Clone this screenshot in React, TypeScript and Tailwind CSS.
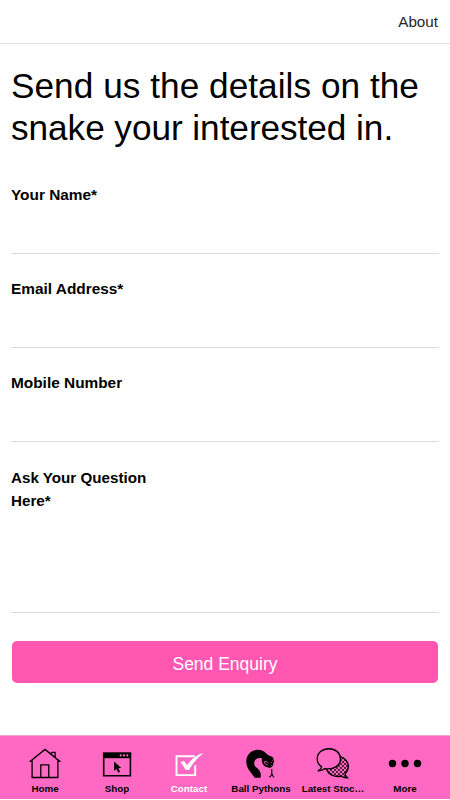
import type { ReactNode } from "react";

interface FieldProps {
  label: string;
  id: string;
  type?: string;
}

function Field({ label, id, type = "text" }: FieldProps) {
  return (
    <div className="h-[94px] flex flex-col items-start">
      <label htmlFor={id} className="text-[15.4px] leading-[23px] font-bold">
        {label}
      </label>
      <input id={id} type={type} className="block w-full h-[48px] border-b border-[#dcdcdc] outline-none" />
    </div>
  );
}

function HomeIcon() {
  return (
    <svg width="34" height="34" viewBox="0 0 34 34" fill="none" stroke="#000" strokeWidth="1.3">
      <path d="M2.4 14.2 17 2.4l14.6 11.8h-1.7V30.5H4.1V14.2H2.4ZM12.8 30.5V17.8h8V30.5M22.8 6.8l1.3-1.4h3v4.8" />
    </svg>
  );
}

function ShopIcon() {
  return (
    <svg width="34" height="34" viewBox="0 0 34 34">
      <path d="M3.7 6.3h26.7v22.4H3.7z" fill="none" stroke="#000" strokeWidth="1.6" />
      <path d="M3 5.6h28.1v5.6H3z" />
      <path d="m14.1 14.5 7.2 6.5-3.1.2 1.9 3.5-1.8 1-1.9-3.6-2.3 1.8z" />
      <g fill="#ff69c3">
        <circle cx="20.7" cy="8.4" r="1.1" />
        <circle cx="24" cy="8.4" r="1.1" />
        <circle cx="27.3" cy="8.4" r="1.1" />
      </g>
    </svg>
  );
}

function ContactIcon() {
  return (
    <svg width="34" height="34" viewBox="0 0 34 34">
      <path d="M23 9.2H4.5v18.9h18.7V18.3" fill="none" stroke="#fff" strokeWidth="1.9" />
      <path d="m8.3 15.2 3.6-1.5 3 4.6c4.3-6 9.2-10.5 16.6-12.4-5.6 4.3-10.5 9.8-14.5 17.2h-3.4c-1.4-3.1-3-5.5-5.3-7.9Z" fill="#fff" />
    </svg>
  );
}

function SnakeIcon() {
  return (
    <svg width="34" height="34" viewBox="0 0 34 34">
      <path d="M10.6 30.8C9.6 27.6 2.3 23.1 2.3 14.5 2.3 7.4 7.5 2.8 13.8 2.8c5.4 0 8.1 3.5 11 5.8 3 .8 5.2 2.1 5.3 4.2.1 1.7-.5 2.7-.8 4.3-.4 2.6-1.9 3.8-4 3.6-3.7-.2-6.6-2.2-7.3-5.6-.3-1.5 0-3-.3-4-4-.6-7.4 1.3-7.5 4.8-.1 2.2 1 3.7 2.8 5.2 3.6 3 4.2 5.7 3.6 9.7Z" />
      <path d="M20.5 14.4c.1 2.4 1.3 3.6 3.3 3.5" fill="none" stroke="#ff69c3" strokeWidth=".9" />
      <path d="M20.8 14.3c1.8.2 3.1.9 3.7 2.1M29.6 11.4c.1 1.1-.4 1.8-1.3 2.1" fill="none" stroke="#ff69c3" strokeWidth=".8" />
      <path d="m27.1 18.9.8-.3m-.7-3.1.9-.2" stroke="#ff69c3" strokeWidth=".8" />
      <path d="M27.8 22v4.8m.1-.4c-.3 1.8-1 2.7-2.5 3.9m2.4-4c.3 1.8 1 2.8 2.4 4" fill="none" stroke="#000" strokeWidth="1.1" />
    </svg>
  );
}

function ChatIcon() {
  return (
    <svg width="34" height="34" viewBox="0 0 34 34" stroke="#000" strokeWidth="1.35" strokeLinejoin="round">
      <defs>
        <pattern id="bubble-dots" width="4" height="4" patternUnits="userSpaceOnUse">
          <circle cx="1" cy="1" r=".9" stroke="none" />
          <circle cx="3" cy="3" r=".9" stroke="none" />
        </pattern>
      </defs>
      <path
        d="M24.2 9.6c4.8 1.4 8.2 5.4 8.1 10-.1 3-1.3 5.3-3.3 7 .3 1.9 1.3 3.3 2.8 4.2-2.6.4-4.8-.2-6.6-1.8-6.5 1.8-13.2-1.5-14.9-7.5"
        fill="url(#bubble-dots)"
      />
      <path
        d="M12.9 1.7C6.2 1.7 1.2 6.1 1.2 11.8c0 3.3 1.7 6.3 4.4 8.1-.3 1.8-1.6 3-3.5 3.9 2.6.2 4.9-.5 6.7-2.2 8.6 1.4 15.7-2.9 15.7-9.7 0-5.8-4.9-10.2-11.6-10.2Z"
        fill="#ff69c3"
      />
    </svg>
  );
}

function MoreIcon() {
  return (
    <svg width="34" height="34" viewBox="0 0 34 34">
      <circle cx="4.5" cy="16.5" r="3.7" />
      <circle cx="17" cy="16.5" r="3.7" />
      <circle cx="29.5" cy="16.5" r="3.7" />
    </svg>
  );
}

interface Tab {
  label: string;
  icon: ReactNode;
  active?: boolean;
}

const tabs: Tab[] = [
  { label: "Home", icon: <HomeIcon /> },
  { label: "Shop", icon: <ShopIcon /> },
  { label: "Contact", icon: <ContactIcon />, active: true },
  { label: "Ball Pythons", icon: <SnakeIcon /> },
  { label: "Latest Stoc…", icon: <ChatIcon /> },
  { label: "More", icon: <MoreIcon /> },
];

export default function App() {
  return (
    <div className="w-[450px] h-[800px] flex flex-col overflow-hidden bg-white text-black font-['Liberation_Sans',Arial,sans-serif]">
      <header className="h-[44px] shrink-0 flex items-center justify-end pr-[12px] pt-[2px] border-b border-[#e3e3e3]">
        <a href="#about" className="text-[15.2px] text-[#262626]">About</a>
      </header>

      <main className="flex-1 px-[11px] pt-[21px]">
        <h1 className="text-[35.2px] leading-[42px] whitespace-nowrap">
          <span className="tracking-[0.04px]">Send us the details on the</span>
          <br />
          <span className="tracking-[-0.05px]">snake your interested in.</span>
        </h1>

        <form className="pt-[34px]">
          <Field label="Your Name*" id="name" />
          <Field label="Email Address*" id="email" type="email" />
          <Field label="Mobile Number" id="mobile" type="tel" />
          <div className="flex flex-col items-start pt-px">
            <label htmlFor="question" className="w-[150px] text-[15.2px] leading-[23px] font-bold">
              Ask Your Question Here*
            </label>
            <textarea id="question" className="block w-full h-[101px] resize-none border-b border-[#dcdcdc] outline-none" />
          </div>
          <button
            type="button"
            className="block w-[426px] h-[42px] mx-auto mt-[28px] pt-[4px] rounded-[5px] bg-[#ff57b2] text-white text-[17.5px]"
          >
            Send Enquiry
          </button>
        </form>
      </main>

      <nav className="h-[64px] mb-px shrink-0 grid grid-cols-6 px-[9px] bg-[#ff69c3] border-t border-[#f5a5d3]">
        {tabs.map((tab) => (
          <a
            key={tab.label}
            href="#tab"
            className={`flex flex-col items-center pt-[11px] text-[9.8px] leading-[12px] font-bold whitespace-nowrap ${tab.active ? "text-white" : "text-black"}`}
          >
            {tab.icon}
            <span className="mt-[2px]">{tab.label}</span>
          </a>
        ))}
      </nav>
    </div>
  );
}
